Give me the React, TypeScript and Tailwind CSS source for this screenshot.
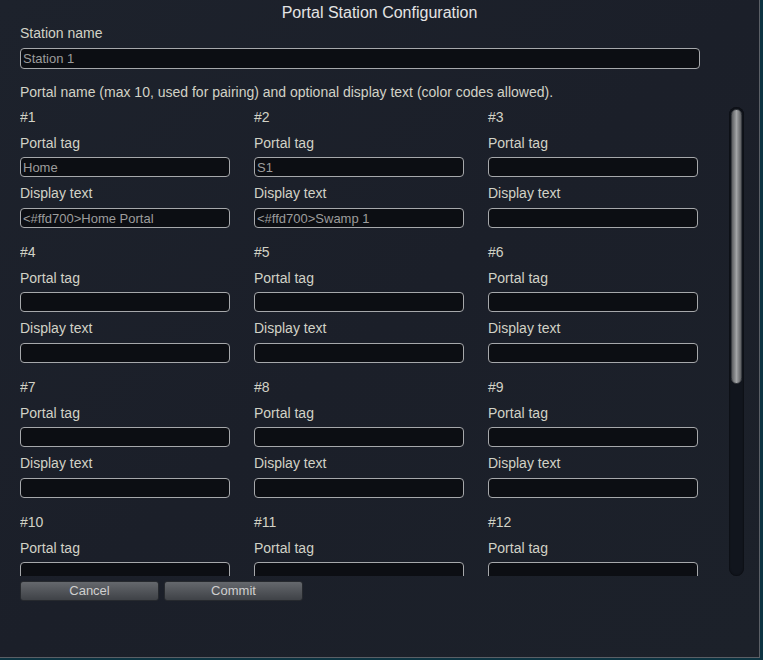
import React from "react";

type Portal = { tag: string; text: string };

const portals: Portal[] = [
  { tag: "Home", text: "<#ffd700>Home Portal" },
  { tag: "S1", text: "<#ffd700>Swamp 1" },
  ...Array.from({ length: 10 }, () => ({ tag: "", text: "" })),
];

function Field({ value, className = "" }: { value: string; className?: string }) {
  return (
    <input
      readOnly
      value={value}
      className={`block h-[20px] w-full rounded-[4px] border border-[#a6a8ab] bg-[#0c0e13] px-[2px] text-[13px] leading-[18px] text-[#9c9c9c] outline-none ${className}`}
    />
  );
}

function PortalCell({ index, portal }: { index: number; portal: Portal }) {
  return (
    <div className="flex flex-col">
      <div className="h-[16px] text-[14px] leading-[16px] text-[#d2d2c6]">#{index}</div>
      <div className="mt-[10px] h-[16px] text-[14px] leading-[16px] text-[#d2d2c6]">Portal tag</div>
      <Field value={portal.tag} className="mt-[6px]" />
      <div className="mt-[8px] h-[16px] text-[14px] leading-[16px] text-[#d2d2c6]">Display text</div>
      <Field value={portal.text} className="mt-[7px]" />
    </div>
  );
}

export default function App() {
  return (
    <div className="h-[660px] w-[763px] overflow-hidden bg-[#0d3442]" style={{ fontFamily: '"Liberation Sans", Arial, sans-serif' }}>
      <div className="flex h-[658px] w-[760px] flex-col border-b border-r border-[#5b5f66] bg-gradient-to-br from-[#1d222c] via-[#1b1f29] to-[#1c212a] pl-[20px]">
        <h1 className="pr-[20px] pt-[3px] text-center text-[16px] leading-[20px] text-[#e4e4e4]">
          Portal Station Configuration
        </h1>
        <div className="mt-[2px] h-[16px] text-[14px] leading-[16px] text-[#d2d2c6]">Station name</div>
        <Field value="Station 1" className="mt-[7px] !h-[21px] !w-[680px]" />
        <div className="mt-[15px] h-[16px] text-[14px] leading-[16px] text-[#d2d2c6]">
          Portal name (max 10, used for pairing) and optional display text (color codes allowed).
        </div>

        <div className="mt-[7px] flex h-[469px] w-[724px]">
          <div className="flex-1 overflow-hidden pt-[2px]">
            <div className="grid w-[678px] grid-cols-3 gap-x-[24px] gap-y-[16px]">
              {portals.map((p, i) => (
                <PortalCell key={i} index={i + 1} portal={p} />
              ))}
            </div>
          </div>
          <div className="flex h-full w-[15px] flex-col rounded-full bg-[#11151d] p-[2px] shadow-[inset_0_0_2px_rgba(0,0,0,0.8)]">
            <div className="h-[275px] w-full rounded-full border border-[#3a3d42] bg-gradient-to-r from-[#5e6063] via-[#a2a4a6] to-[#5e6063]" />
          </div>
        </div>

        <div className="mt-[5px] flex gap-[5px]">
          <button className="h-[20px] w-[139px] rounded-[3px] border border-[#26292e] bg-gradient-to-b from-[#65686d] to-[#3f4247] text-[13px] leading-[18px] text-[#cfcfcf]">
            Cancel
          </button>
          <button className="h-[20px] w-[139px] rounded-[3px] border border-[#26292e] bg-gradient-to-b from-[#65686d] to-[#3f4247] text-[13px] leading-[18px] text-[#cfcfcf]">
            Commit
          </button>
        </div>
      </div>
    </div>
  );
}
